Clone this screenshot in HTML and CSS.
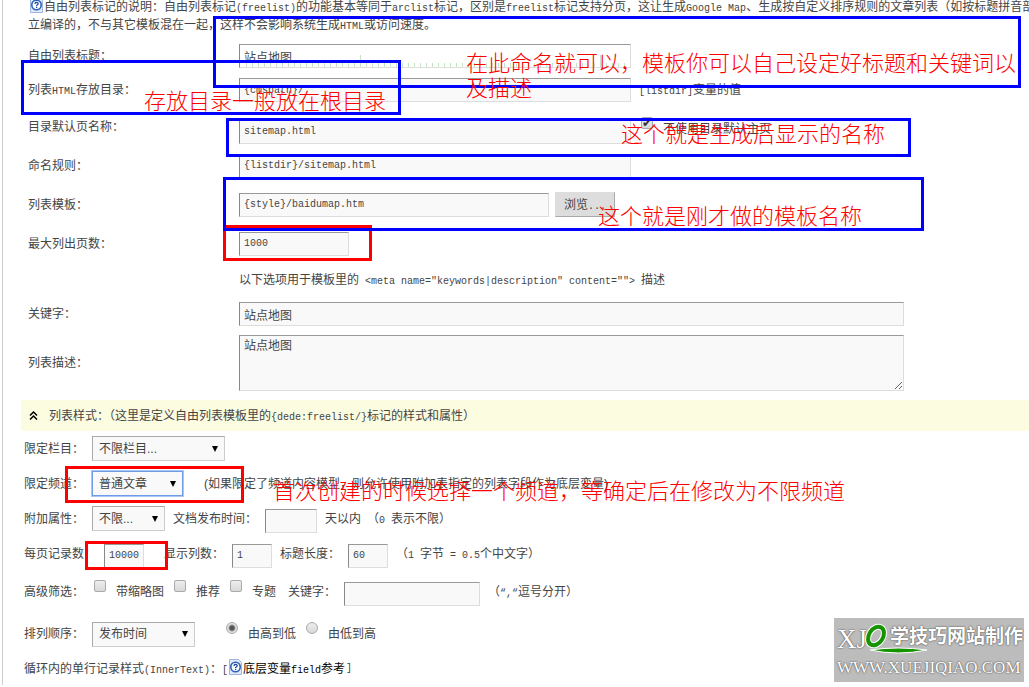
FILE: index.html
```html
<!DOCTYPE html>
<html lang="zh-CN">
<head>
  <meta charset="UTF-8" />
  <title>自由列表</title>
  <link rel="stylesheet" href="styles.css">
</head>
<body>

  <form class="page">
    <p class="intro">
      <svg class="help" width="13" height="16" viewBox="0 0 13 16"><path d="M.5 .5h9l3 3v12H.5z" fill="#dfe9fa" stroke="#9db6e0"/><circle cx="6.5" cy="8" r="4.7" fill="#fff" stroke="#2c5fb8" stroke-width="1.6"/><path d="M5 7c0-2 3.200-2 3.200-.3 0 1-1.600 1-1.600 2.200M6.600 9.800v1.200" fill="none" stroke="#1c4796" stroke-width="1.300"/></svg>自由列表标记的说明：自由列表标记<code>(freelist)</code>的功能基本等同于<code>arclist</code>标记，区别是<code>freelist</code>标记支持分页，这让生成<code>Google Map</code>、生成按自定义排序规则的文章列表（如按标题拼音部首<br>
      立编译的，不与其它模板混在一起，这样不会影响系统生成<code>HTML</code>或访问速度。
    </p>

    <div class="fields">
      <div class="row">
        <label for="title">自由列表标题：</label>
        <div class="control"><input type="text" id="title" class="wide ruler" value="站点地图"></div>
      </div>
      <div class="row">
        <label for="listdir">列表<code>HTML</code>存放目录：</label>
        <div class="control"><input type="text" id="listdir" class="wide latin" value="{cmspath}/"><span><code>[listdir]</code>变量的值</span></div>
      </div>
      <div class="row tall">
        <label for="defaultpage">目录默认页名称：</label>
        <div class="control low">
          <input type="text" id="defaultpage" class="wide latin" value="sitemap.html">
          <span class="option"><input type="checkbox" id="nodefault" checked><label for="nodefault">不使用目录默认主页</label></span>
        </div>
      </div>
      <div class="row tall">
        <label for="namerule">命名规则：</label>
        <div class="control"><input type="text" id="namerule" class="wide latin" value="{listdir}/sitemap.html"></div>
      </div>
      <div class="row tall">
        <label for="template">列表模板：</label>
        <div class="control browse"><input type="text" id="template" class="medium latin" value="{style}/baidumap.htm"><button type="button">浏览<code>...</code></button></div>
      </div>
      <div class="row tall">
        <label for="maxpage">最大列出页数：</label>
        <div class="control"><input type="text" id="maxpage" class="short latin" value="1000"></div>
      </div>
      <div class="row">
        <span></span>
        <p class="note">以下选项用于模板里的<code> &lt;meta name="keywords|description" content=""&gt; </code>描述</p>
      </div>
      <div class="row">
        <label for="keywords">关键字：</label>
        <div class="control"><input type="text" id="keywords" class="full" value="站点地图"></div>
      </div>
      <div class="row">
        <label for="description">列表描述：</label>
        <div class="control area"><textarea id="description" class="full">站点地图</textarea></div>
      </div>
    </div>

    <h2 class="bar">
      <svg width="9" height="9" viewBox="0 0 9 9"><path d="M1 4.500L4.500 1 8 4.500M1 8.500L4.500 5 8 8.500" fill="none" stroke="#000" stroke-width="1.500"/></svg>
      <span>列表样式：（这里是定义自由列表模板里的<code>{dede:freelist/}</code>标记的样式和属性）</span>
    </h2>

    <div class="styles">
      <div class="line">
        <label class="name" for="column">限定栏目：</label>
        <select id="column" class="column"><option>不限栏目...</option></select>
      </div>
      <div class="line">
        <label class="name" for="channel">限定频道：</label>
        <select id="channel" class="channel active"><option>普通文章</option></select>
        <span class="hint">(如果限定了频道内容模型，则允许使用附加表指定的列表字段作为底层变量)</span>
      </div>
      <div class="line">
        <label class="name" for="attr">附加属性：</label>
        <select id="attr" class="attr"><option>不限...</option></select>
        <label for="days">文档发布时间：</label>
        <input type="text" id="days" class="days">
        <span>天以内<code> </code>（<code>0 </code>表示不限）</span>
      </div>
      <div class="line">
        <label class="name" for="pagesize">每页记录数：</label>
        <input type="text" id="pagesize" class="num latin first" value="10000">
        <label for="cols">显示列数：</label>
        <input type="text" id="cols" class="num latin" value="1">
        <label for="titlelen">标题长度：</label>
        <input type="text" id="titlelen" class="num latin" value="60">
        <span>（<code>1 </code>字节<code> = 0.5</code>个中文字）</span>
      </div>
      <div class="line roomy">
        <span class="name">高级筛选：</span>
        <span class="option"><input type="checkbox" id="thumb"><label for="thumb">带缩略图</label></span>
        <span class="option"><input type="checkbox" id="commend"><label for="commend">推荐</label></span>
        <span class="option"><input type="checkbox" id="spec"><label for="spec">专题</label></span>
        <label class="gap" for="filter">关键字：</label>
        <input type="text" id="filter" class="filter">
        <span>（<code>“,“</code>逗号分开）</span>
      </div>
      <div class="line roomy">
        <label class="name" for="orderby">排列顺序：</label>
        <select id="orderby" class="orderby"><option>发布时间</option></select>
        <span class="option order"><input type="radio" name="order" id="desc" checked><label for="desc">由高到低</label></span>
        <span class="option"><input type="radio" name="order" id="asc"><label for="asc">由低到高</label></span>
      </div>
      <div class="line last">
        <span>循环内的单行记录样式<code>(InnerText)</code>：<code>[</code></span>
        <a href="#"><svg class="help" width="13" height="16" viewBox="0 0 13 16"><path d="M.5 .5h9l3 3v12H.5z" fill="#dfe9fa" stroke="#9db6e0"/><circle cx="6.5" cy="8" r="4.7" fill="#fff" stroke="#2c5fb8" stroke-width="1.6"/><path d="M5 7c0-2 3.200-2 3.200-.3 0 1-1.600 1-1.600 2.200M6.600 9.800v1.200" fill="none" stroke="#1c4796" stroke-width="1.300"/></svg>底层变量<code>field</code>参考</a>
        <code>]</code>
      </div>
    </div>
  </form>

  <!-- hand-drawn marks over the form -->
  <div class="mark red mark-max"></div>
  <div class="mark red mark-channel"></div>
  <div class="mark red mark-pagesize"></div>
  <div class="mark mark-title"></div>
  <div class="mark mark-dir"></div>
  <div class="mark mark-default"></div>
  <div class="mark mark-template"></div>

  <p class="tip tip-title">在此命名就可以，模板你可以自己设定好标题和关键词以<br>及描述</p>
  <p class="tip tip-dir">存放目录一般放在根目录</p>
  <p class="tip tip-default">这个就是生成后显示的名称</p>
  <p class="tip tip-template">这个就是刚才做的模板名称</p>
  <p class="tip tip-channel">首次创建的时候选择一个频道，等确定后在修改为不限频道</p>

  <div class="watermark">
    <div class="brand">
      <span class="xj">XJ</span>
      <svg width="64" height="32" viewBox="0 0 64 32"><ellipse cx="12" cy="14" rx="7" ry="10" transform="rotate(32 12 14)" fill="none" stroke="#fff" stroke-width="6"/><ellipse cx="12" cy="14" rx="7" ry="10" transform="rotate(32 12 14)" fill="none" stroke="#159400" stroke-width="4"/><path d="M6 28Q34 24 63 28Q34 34 6 28z" fill="#159400" stroke="#fff"/></svg>
      <span class="cn">学技巧网站制作</span>
    </div>
    <div class="url">WWW.XUEJIQIAO.COM</div>
  </div>

</body>
</html>
```
FILE: styles.css
```css
* {
  box-sizing: border-box;
}
body {
  margin: 0;
  position: relative;
  overflow: hidden;
  background: #fff;
  color: #444;
  font: 12px/18px "Liberation Sans", "Noto Sans CJK SC", sans-serif;
}
p,
h2 {
  margin: 0;
}
code {
  font: 10px/1 "Liberation Mono", monospace;
}
.page {
  margin-left: 2px;
  border-left: 1px solid #ccc;
  min-height: 100vh;
  white-space: nowrap;
}
.help {
  vertical-align: -2px;
  margin: -6px 1px 0 0;
}

/* intro */
.intro {
  margin-top: -2px;
  padding-left: 25px;
}
.intro .help {
  margin-left: 2px;
}

/* controls */
input,
select,
textarea,
button {
  margin: 0;
  font: inherit;
  color: #444;
}
input[type="text"],
textarea {
  height: 24px;
  padding: 0 4px;
  border: 1px solid #ddd;
  border-top-color: #999;
  border-left-color: #888;
  background: #f9f9f9;
}
input.latin {
  font: 10px "Liberation Mono", monospace;
}
input[type="checkbox"],
input[type="radio"] {
  appearance: none;
  width: 12px;
  height: 12px;
  border: 1px solid #aaa;
  border-radius: 2px;
  background: linear-gradient(#eee, #d8d8d8);
  position: relative;
  top: -6px;
}
input[type="radio"] {
  border-radius: 50%;
}
input[type="radio"]:checked {
  background: radial-gradient(circle, #555 0 2px, #e2e2e2 4px);
}
input[type="checkbox"]:checked::after {
  content: "✔";
  position: absolute;
  left: 0;
  top: -4px;
  font: 12px/18px "DejaVu Sans", sans-serif;
  color: #333;
}
select {
  appearance: none;
  height: 25px;
  padding: 0 6px;
  border: 1px solid #ccc;
  border-top-color: #aaa;
  border-left-color: #aaa;
  border-radius: 0;
  background: #f9f9f9 url("data:image/svg+xml,%3Csvg xmlns='http://www.w3.org/2000/svg' width='6' height='6'%3E%3Cpath d='M0 0h6L3 6z'/%3E%3C/svg%3E") no-repeat right 6px center;
}
button {
  width: 60px;
  height: 25px;
  padding: 0 8px;
  border: 1px solid #ddd;
  border-right-color: #aaa;
  border-bottom-color: #aaa;
  background: #ddd;
  text-align: left;
}
.option {
  display: flex;
  align-items: center;
  gap: 10px;
  margin-left: 2px;
}

/* upper form */
.fields {
  padding: 5px 0 5px 25px;
}
.row {
  display: grid;
  grid-template-columns: 211px 1fr;
  align-items: center;
  min-height: 34px;
}
.tall {
  min-height: 39px;
}
.control {
  display: flex;
  align-items: center;
  gap: 8px;
}
.low {
  align-items: flex-start;
  padding-top: 10px;
}
.browse {
  gap: 6px;
}
.area {
  padding: 4px 0;
}
.wide {
  width: 392px;
}
.medium {
  width: 310px;
}
.short {
  width: 110px;
}
.full {
  width: 665px;
}
textarea.full {
  height: 56px;
  padding: 1px 4px;
}
input.ruler {
  background:
    repeating-linear-gradient(90deg, #c4e6c4 0 1px, transparent 1px 120px) 120px 100% / 100% 12px no-repeat,
    repeating-linear-gradient(90deg, #c4e6c4 0 1px, transparent 1px 6px) 6px 100% / 100% 4px no-repeat,
    #fff;
}
.note code {
  white-space: pre;
}

/* section bar */
.bar {
  display: flex;
  align-items: center;
  gap: 11px;
  height: 31px;
  margin-left: 18px;
  padding-left: 8px;
  background: #fcfce0;
  font-size: 12px;
  font-weight: normal;
}

/* list style options */
.styles {
  padding-left: 21px;
}
.line {
  display: flex;
  align-items: center;
  gap: 8px;
  min-height: 35px;
}
.roomy {
  min-height: 42px;
}
.line input[type="text"] {
  margin-top: 4px;
}
.name {
  width: 60px;
}
.column {
  width: 133px;
}
.channel {
  width: 91px;
}
.attr {
  width: 73px;
}
.orderby {
  width: 103px;
}
.active {
  border-color: #6f9ce8;
  box-shadow: 0 0 0 1px #a9c5f3;
}
.hint {
  margin-left: 13px;
}
.days {
  width: 52px;
}
.num {
  width: 40px;
}
.first {
  margin: 0 12px;
}
.gap {
  margin-left: 4px;
}
.filter {
  width: 136px;
}
.order {
  margin-left: 23px;
}
.last {
  gap: 1px;
  min-height: 27px;
}
.last a {
  color: #000;
  text-decoration: none;
}

/* marks and tips */
.mark {
  position: absolute;
  border: 3px solid #00f;
}
.red {
  border-color: #f00;
}
.mark-title {
  left: 213px;
  top: 16px;
  width: 808px;
  height: 72px;
}
.mark-dir {
  left: 21px;
  top: 60px;
  width: 380px;
  height: 55px;
}
.mark-default {
  left: 226px;
  top: 118px;
  width: 685px;
  height: 39px;
}
.mark-template {
  left: 223px;
  top: 177px;
  width: 701px;
  height: 54px;
}
.mark-max {
  left: 223px;
  top: 225px;
  width: 149px;
  height: 36px;
}
.mark-channel {
  left: 65px;
  top: 466px;
  width: 179px;
  height: 37px;
}
.mark-pagesize {
  left: 85px;
  top: 541px;
  width: 83px;
  height: 29px;
}
.tip {
  position: absolute;
  color: #f00;
  font: 300 22px/25px "Noto Sans CJK SC", sans-serif;
  white-space: nowrap;
}
.tip-title {
  left: 466px;
  top: 49px;
}
.tip-dir {
  left: 144px;
  top: 87px;
}
.tip-default {
  left: 621px;
  top: 120px;
}
.tip-template {
  left: 598px;
  top: 202px;
}
.tip-channel {
  left: 273px;
  top: 477px;
}

/* watermark */
.watermark {
  position: absolute;
  right: 5px;
  top: 618px;
  width: 190px;
  height: 64px;
  padding: 4px 3px;
  background: #bcbcbc;
  color: #fff;
  text-shadow: 0 0 2px #555, 0 0 1px #555;
  white-space: nowrap;
}
.brand {
  display: flex;
  height: 36px;
}
.brand svg {
  flex: none;
  margin: 0 -38px 0 -3px;
}
.xj {
  font: 27px/34px "Liberation Serif", serif;
}
.cn {
  position: relative;
  font: bold 19px/26px "Noto Sans CJK SC", sans-serif;
}
.url {
  font: 17px/20px "Liberation Serif", serif;
}
```
